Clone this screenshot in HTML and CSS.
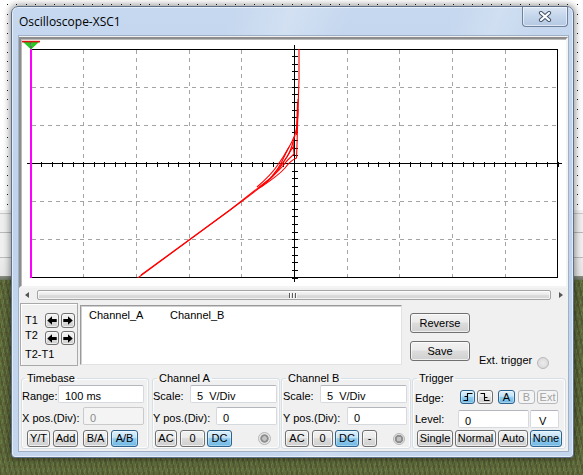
FILE: index.html
```html
<!DOCTYPE html>
<html lang="en">
<head>
<meta charset="utf-8">
<title>Oscilloscope-XSC1</title>
<link rel="stylesheet" href="styles.css">
</head>
<body>
<div class="desktop">
  <div class="dots">
    <svg class="dotsvg" width="583" height="210">
      <defs>
        <pattern id="dp" x="7" y="4" width="19" height="19" patternUnits="userSpaceOnUse">
          <rect x="0" y="0" width="1" height="1" fill="#1a1a1a"/>
          <rect x="9" y="0" width="1" height="1" fill="#1a1a1a"/>
          <rect x="0" y="10" width="1" height="1" fill="#1a1a1a"/>
          <rect x="9" y="10" width="1" height="1" fill="#1a1a1a"/>
        </pattern>
      </defs>
      <rect width="583" height="210" fill="url(#dp)"/>
    </svg>
  </div>
  <div class="band"></div>
  <div class="grass"></div>

  <div class="window">
    <div class="titlebar">
      <span class="title">Oscilloscope-XSC1</span>
      <div class="close">
        <svg width="14" height="11" viewBox="0 0 14 11">
          <path d="M3,2 L11,9 M11,2 L3,9" stroke="#45556c" stroke-width="4.2" stroke-linecap="round"/>
          <path d="M3,2 L11,9 M11,2 L3,9" stroke="#ffffff" stroke-width="2.2" stroke-linecap="round"/>
        </svg>
      </div>
    </div>

    <div class="client">
      <div class="plot">
        <svg class="scope" width="545" height="247" viewBox="0 0 545 247">
          <defs>
            <clipPath id="gridclip"><rect x="10" y="10" width="527" height="229"/></clipPath>
          </defs>
          <g stroke="#a4a4a4" stroke-width="1" stroke-dasharray="4 4" fill="none" shape-rendering="crispEdges">
            <path d="M62.5,11V239 M115.5,11V239 M168.5,11V239 M220.5,11V239 M326.5,11V239 M378.5,11V239 M431.5,11V239 M484.5,11V239"/>
            <path d="M11,48.5H537 M11,86.5H537 M11,162.5H537 M11,200.5H537"/>
          </g>
          <rect x="10.5" y="10.5" width="526" height="228" fill="none" stroke="#000" shape-rendering="crispEdges"/>
          <g stroke="#000" fill="none" shape-rendering="crispEdges">
            <path d="M273.5,6V243 M6,124.5H541"/>
            <path d="M273.5,9.5V239.5" stroke-width="6" stroke-dasharray="1 6.634"/>
            <path d="M9.5,125H537.5" stroke-width="5" stroke-dasharray="1 9.54"/>
          </g>
          <g clip-path="url(#gridclip)" stroke="#ff0000" stroke-width="1.1" fill="none" stroke-linejoin="round">
            <path d="M114,241 L209,171 Q232,153 249,139.5 Q258,130 264,116 Q268,108 271,102.5 Q275,95 275.7,88 L276.7,78 L277.3,61 L278,41 L278,8"/>
            <path d="M120,236 L207,172.5 Q230,156 247,142 Q256,134 262,124 Q267,116 272,108"/>
            <path d="M277,70 L276,106 L275.5,119 Q270,121 264,129 Q258,136 240,148"/>
            <path d="M272,103 L273,115 Q266,121 261,128 Q255,135 238,149"/>
            <path d="M268,108 Q262,119 256,127 Q250,136 236,148"/>
            <path d="M274,96 Q270,112 266,118 Q259,128 252,136"/>
            <path d="M276.3,86 L277.1,60 M275.4,96 L276.5,64"/>
          </g>
          <path d="M10,8V239" stroke="#ff00ff" stroke-width="2" shape-rendering="crispEdges"/>
          <polygon points="1,2 19,2 10,10.5" fill="#22cc22"/>
          <path d="M1,2.6H19" stroke="#e01010" stroke-width="1.6"/>
          <text x="10" y="7.6" font-size="6" font-family="Liberation Sans, Arial, sans-serif" text-anchor="middle" fill="#fff" stroke="#333" stroke-width="0.3">1</text>
        </svg>
      </div>

      <div class="hscroll">
        <div class="sbtn"><span class="tri left"></span></div>
        <div class="thumb"><span class="grip"></span></div>
        <div class="sbtn"><span class="tri right"></span></div>
      </div>

      <div class="cursors">
        <div class="tbox">
          <div class="trow first">
            <span class="tlabel">T1</span>
            <span class="abtn"><svg width="10" height="9" viewBox="0 0 10 9"><path d="M0.3,4.5 L5,0.3 V3 H9.7 V6 H5 V8.7 Z" fill="#000"/></svg></span>
            <span class="abtn"><svg width="10" height="9" viewBox="0 0 10 9"><path d="M9.7,4.5 L5,0.3 V3 H0.3 V6 H5 V8.7 Z" fill="#000"/></svg></span>
          </div>
          <div class="trow second">
            <span class="tlabel top">T2</span>
            <span class="abtn"><svg width="10" height="9" viewBox="0 0 10 9"><path d="M0.3,4.5 L5,0.3 V3 H9.7 V6 H5 V8.7 Z" fill="#000"/></svg></span>
            <span class="abtn"><svg width="10" height="9" viewBox="0 0 10 9"><path d="M9.7,4.5 L5,0.3 V3 H0.3 V6 H5 V8.7 Z" fill="#000"/></svg></span>
          </div>
          <div class="tdiff">T2-T1</div>
        </div>
        <div class="readout">
          <span class="ch">Channel_A</span>
          <span class="ch">Channel_B</span>
        </div>
        <div class="actions">
          <div class="btn big">Reverse</div>
          <div class="btn big">Save</div>
        </div>
        <div class="ext">
          <span class="extlbl">Ext. trigger</span>
          <span class="radio hollow"></span>
        </div>
      </div>

      <div class="controls">
        <fieldset class="group tb">
          <legend>Timebase</legend>
          <div class="row">
            <span class="lbl w36">Range:</span>
            <span class="field w86">100 ms</span>
          </div>
          <div class="row r2">
            <span class="lbl w61">X pos.(Div):</span>
            <span class="field dis w61">0</span>
          </div>
          <div class="row r3 tb-btns">
            <span class="btn w23">Y/T</span>
            <span class="btn w25 g3">Add</span>
            <span class="btn w25 g5">B/A</span>
            <span class="btn on w27 g3">A/B</span>
          </div>
        </fieldset>

        <fieldset class="group cha">
          <legend>Channel A</legend>
          <div class="row">
            <span class="lbl w37">Scale:</span>
            <span class="field w87">5&nbsp; V/Div</span>
          </div>
          <div class="row r2">
            <span class="lbl w63">Y pos.(Div):</span>
            <span class="field w61">0</span>
          </div>
          <div class="row r3 cha-btns">
            <span class="btn w22">AC</span>
            <span class="btn w25 g3">0</span>
            <span class="btn on w25 g2">DC</span>
            <span class="radio dot ra"></span>
          </div>
        </fieldset>

        <fieldset class="group chb">
          <legend>Channel B</legend>
          <div class="row">
            <span class="lbl w37 m1">Scale:</span>
            <span class="field w87">5&nbsp; V/Div</span>
          </div>
          <div class="row r2">
            <span class="lbl w64 m1">Y pos.(Div):</span>
            <span class="field w60">0</span>
          </div>
          <div class="row r3 chb-btns">
            <span class="btn w24">AC</span>
            <span class="btn w21 g3">0</span>
            <span class="btn on w24 g2">DC</span>
            <span class="btn w15 g3">-</span>
            <span class="radio dot rb"></span>
          </div>
        </fieldset>

        <fieldset class="group trig">
          <legend>Trigger</legend>
          <div class="row t1">
            <span class="lbl w45 m2">Edge:</span>
            <span class="btn on sm w15">
              <svg width="10" height="10" viewBox="0 0 10 10"><path d="M0.5,8.5H4.5V1.5H9.5" fill="none" stroke="#000" stroke-width="1.1"/><path d="M1.5,4.5H4.5" stroke="#000" stroke-width="1"/></svg>
            </span>
            <span class="btn sm w16 g2">
              <svg width="10" height="10" viewBox="0 0 10 10"><path d="M0.5,1.5H4.5V8.5H9.5" fill="none" stroke="#000" stroke-width="1.1"/><path d="M4.5,5.5H7.5" stroke="#000" stroke-width="1"/></svg>
            </span>
            <span class="btn on sm w17 g5">A</span>
            <span class="btn dis sm w17 g3">B</span>
            <span class="btn dis sm w21 g2">Ext</span>
          </div>
          <div class="row t2">
            <span class="lbl w43 m2">Level:</span>
            <span class="field w71">0</span>
            <span class="field w29 g1 vbox">V</span>
          </div>
          <div class="row t3">
            <span class="btn w36 m4">Single</span>
            <span class="btn w41 g2">Normal</span>
            <span class="btn w30 g2">Auto</span>
            <span class="btn on w32 g2">None</span>
          </div>
        </fieldset>
      </div>
    </div>
  </div>
</div>
</body>
</html>
```

FILE: styles.css
```css
* { box-sizing: border-box; }
html, body { margin: 0; padding: 0; }
body {
  width: 583px;
  height: 475px;
  overflow: hidden;
  font-family: "Liberation Sans", Arial, sans-serif;
  font-size: 11px;
  color: #000;
}

/* ---------- desktop background ---------- */
.desktop {
  position: relative;
  width: 583px;
  height: 475px;
  display: flex;
  flex-direction: column;
  overflow: hidden;
}
.dots { height: 210px; background: #fff; }
.dotsvg { display: block; }
.band {
  height: 70px;
  background:
    linear-gradient(to bottom,
      #f3f3f3 0, #f3f3f3 3px, #c9c9c9 3px, #c9c9c9 4px,
      #efefef 4px, #efefef 22px, #b9b9b9 22px, #b9b9b9 23px,
      #f0f0f0 23px, #f0f0f0 47px, #bcbcbc 47px, #bcbcbc 48px,
      #ececec 48px, #e6e6e6 66px, #8a8f85 66px, #6d7460 70px);
}
.grass {
  flex: 1;
  background:
    radial-gradient(ellipse 18px 9px at 20% 30%, rgba(130,110,70,.55), transparent),
    radial-gradient(ellipse 14px 8px at 70% 60%, rgba(120,100,60,.5), transparent),
    radial-gradient(ellipse 20px 10px at 40% 85%, rgba(40,55,25,.5), transparent),
    repeating-linear-gradient(78deg, rgba(0,0,0,.16) 0 2px, transparent 2px 5px),
    repeating-linear-gradient(104deg, rgba(230,230,170,.10) 0 1px, transparent 1px 4px),
    repeating-linear-gradient(0deg, rgba(90,70,40,.18) 0 3px, transparent 3px 7px),
    #5f6e3c;
}

/* ---------- window ---------- */
.window {
  position: absolute;
  left: 11px;
  top: 6px;
  width: 563px;
  height: 452px;
  border: 1px solid #5f7089;
  border-radius: 7px 7px 4px 4px;
  padding: 0 5px 6px 7px;
  display: flex;
  flex-direction: column;
  background:
    linear-gradient(112deg, transparent 0, transparent 30%, rgba(255,255,255,.22) 38%, transparent 46%, transparent 60%, rgba(255,255,255,.18) 66%, transparent 72%),
    linear-gradient(to bottom, #c6d8ef, #bfd3ec 40%, #c3d6ee);
  box-shadow: 0 0 7px 1px rgba(0,0,0,.45), inset 0 0 0 1px rgba(255,255,255,.55);
}
.titlebar {
  height: 29px;
  flex: none;
  display: flex;
  align-items: flex-start;
}
.title {
  margin-top: 7px;
  font-family: "Open Sans", "Liberation Sans", sans-serif;
  font-size: 12px;
  line-height: 16px;
  color: #000;
}
.close {
  margin-left: auto;
  width: 46px;
  height: 20px;
  border: 1px solid #6f819b;
  border-top: none;
  border-radius: 0 0 4px 4px;
  background: linear-gradient(to bottom, #d9e5f4, #c4d5ea 50%, #b5c9e3);
  box-shadow: inset 0 0 0 1px rgba(255,255,255,.55);
  display: flex;
  align-items: center;
  justify-content: center;
}
.close svg { display: block; }

.client {
  flex: 1;
  background: #f0f0f0;
  box-shadow: 0 0 0 1px #9fb0c7;
  display: flex;
  flex-direction: column;
}

/* ---------- plot ---------- */
.plot {
  margin-top: 1px;
  height: 251px;
  border: 2px solid;
  border-color: #8d8d8d #f4f4f4 #f4f4f4 #8d8d8d;
  background: #fff;
  box-shadow: inset 1px 1px 0 #b9b9b9;
}
.scope { display: block; }

/* ---------- scrollbar ---------- */
.hscroll {
  height: 13px;
  display: flex;
}
.sbtn {
  width: 18px;
  display: flex;
  align-items: center;
  justify-content: center;
}
.sbtn:last-child { width: 17px; }
.tri { width: 0; height: 0; border-top: 3.5px solid transparent; border-bottom: 3.5px solid transparent; }
.tri.left { border-right: 4px solid #555; margin-left: -3px; }
.tri.right { border-left: 4px solid #555; margin-left: 2px; }
.thumb {
  width: 514px;
  height: 10px;
  margin-top: 2px;
  border: 1px solid #a3a3a3;
  border-radius: 2px;
  background: linear-gradient(to bottom, #f6f6f6, #e9e9e9 50%, #dcdcdc 51%, #d3d3d3);
  box-shadow: inset 0 0 0 1px rgba(255,255,255,.7);
  display: flex;
  align-items: center;
  justify-content: center;
}
.grip {
  width: 8px;
  height: 5px;
  margin-left: -2px;
  background: repeating-linear-gradient(to right, #5c5c5c 0 1px, #f8f8f8 1px 2px, transparent 2px 3px);
}

/* ---------- cursor readout ---------- */
.cursors {
  height: 65px;
  display: flex;
  align-items: flex-start;
}
.tbox {
  margin: 2px 0 0 1px;
  width: 58px;
  height: 63px;
  border: 1px solid #a9a9a9;
  box-shadow: inset 1px 1px 0 #fff;
  padding: 9px 0 0 4px;
}
.trow { display: flex; align-items: center; }
.trow.first { height: 15px; }
.trow.second { height: 14px; margin-top: 3px; }
.tlabel { width: 20px; line-height: 13px; }
.tlabel.top { align-self: flex-start; margin-top: -2px; }
.abtn {
  width: 14px;
  height: 100%;
  margin-right: 2px;
  border: 1px solid #707070;
  border-radius: 3px;
  background: linear-gradient(to bottom, #f2f2f2, #ebebeb 45%, #dddddd 50%, #cfcfcf);
  box-shadow: inset 0 0 0 1px rgba(255,255,255,.6);
  display: flex;
  align-items: center;
  justify-content: center;
}
.abtn svg { display: block; }
.tdiff { margin-top: 3px; line-height: 13px; }

.readout {
  margin: 4px 0 0 2px;
  width: 322px;
  height: 60px;
  background: #fff;
  border: 1px solid;
  border-color: #9a9a9a #e2e2e2 #e2e2e2 #9a9a9a;
  box-shadow: inset 1px 1px 0 #cfcfcf;
  padding: 3px 0 0 8px;
  display: flex;
  line-height: 13px;
}
.ch { width: 81px; }

.actions {
  margin: 12px 0 0 8px;
  width: 60px;
  display: flex;
  flex-direction: column;
  gap: 8px;
}
.ext {
  margin: 53px 0 0 9px;
  display: flex;
  align-items: flex-start;
  gap: 5px;
}
.extlbl { line-height: 13px; }

/* ---------- buttons ---------- */
.btn {
  height: 17px;
  border: 1px solid #707070;
  border-radius: 3px;
  background: linear-gradient(to bottom, #f2f2f2, #ebebeb 45%, #dddddd 50%, #cfcfcf);
  box-shadow: inset 0 0 0 1px rgba(255,255,255,.65);
  display: flex;
  align-items: center;
  justify-content: center;
  line-height: 13px;
  white-space: nowrap;
  color: #000;
  flex: none;
}
.btn.big { height: 20px; }
.btn.sm { height: 14px; }
.btn.on {
  border-color: #2c628b;
  background: linear-gradient(to bottom, #e0f1fc, #bfe1f7 45%, #94cdf0 50%, #6fb7e3);
  box-shadow: inset 0 0 0 1px rgba(255,255,255,.35);
}
.btn.dis {
  color: #a2a2a2;
  border-color: #b5b9bc;
  background: #f4f4f4;
  box-shadow: none;
}
.btn svg { display: block; }

.radio {
  flex: none;
  border-radius: 50%;
  display: block;
}
.radio.hollow {
  width: 12px;
  height: 12px;
  margin-top: 3px;
  border: 1px solid #b8b8b8;
  background: radial-gradient(circle at 50% 50%, #ececec 0, #dcdcdc 70%, #d0d0d0);
}
.radio.dot {
  width: 13px;
  height: 13px;
  border: 1px solid #b5b5b5;
  background: radial-gradient(circle at 50% 50%, #c2c2c2 0, #c2c2c2 2px, #8e8e8e 2.6px, #8e8e8e 3.8px, #e0e0e0 4.5px, #f2f2f2 6px);
}
.radio.ra { margin-left: 26px; }
.radio.rb { margin-left: 16px; width: 12px; height: 12px; }

/* ---------- group boxes ---------- */
.controls {
  margin-top: 6px;
  padding-left: 2px;
  display: flex;
  align-items: flex-start;
}
.group {
  margin: 0;
  padding: 0 0 1px 0;
  border: 1px solid #d5dfe5;
  border-radius: 3px;
  box-shadow: inset 0 0 0 1px rgba(255,255,255,.8);
  min-width: 0;
}
.group legend {
  padding: 0 2px;
  margin-left: 3px;
  line-height: 13px;
  font-size: 11px;
}
.group.tb { width: 128px; }
.group.cha { width: 128px; margin-left: 3px; }
.group.chb { width: 130px; margin-left: 1px; }
.group.trig { width: 154px; margin-left: 1px; }
.group.cha legend, .group.chb legend, .group.trig legend { margin-left: 4px; }

.row { display: flex; align-items: center; height: 18px; }
.row.r2 { margin-top: 4px; }
.row.r3 { margin-top: 5px; height: 17px; }
.row.t1 { margin-top: 3px; }
.row.t2 { margin-top: 4px; }
.row.t3 { margin-top: 2px; height: 17px; }

.tb-btns { padding-left: 5px; }
.cha-btns { padding-left: 2px; }
.chb-btns { padding-left: 3px; }

.lbl {
  flex: none;
  line-height: 13px;
  padding-top: 4px;
  white-space: nowrap;
}
.row.t1 .lbl { padding-top: 2px; }
.row.t2 .lbl { padding-top: 1px; }

.field {
  flex: none;
  height: 18px;
  background: #fff;
  border: 1px solid #d6dadf;
  border-top-color: #b3b6bc;
  border-radius: 2px;
  padding: 3px 0 0 6px;
  line-height: 14px;
  white-space: nowrap;
}
.field.dis { background: #f4f4f4; color: #8c8c8c; border-color: #cacaca; }
.field.vbox { padding-left: 8px; }

.m1 { margin-left: 1px; }
.m2 { margin-left: 2px; }
.m4 { margin-left: 4px; }
.g1 { margin-left: 1px; }
.g2 { margin-left: 2px; }
.g3 { margin-left: 3px; }
.g5 { margin-left: 5px; }

.w15 { width: 15px; }
.w16 { width: 16px; }
.w17 { width: 17px; }
.w21 { width: 21px; }
.w22 { width: 22px; }
.w23 { width: 23px; }
.w24 { width: 24px; }
.w25 { width: 25px; }
.w27 { width: 27px; }
.w29 { width: 29px; }
.w30 { width: 30px; }
.w32 { width: 32px; }
.w36 { width: 36px; }
.w37 { width: 37px; }
.w41 { width: 41px; }
.w43 { width: 43px; }
.w45 { width: 45px; }
.w60 { width: 60px; }
.w61 { width: 61px; }
.w63 { width: 63px; }
.w64 { width: 64px; }
.w71 { width: 71px; }
.w86 { width: 86px; }
.w87 { width: 87px; }
```
